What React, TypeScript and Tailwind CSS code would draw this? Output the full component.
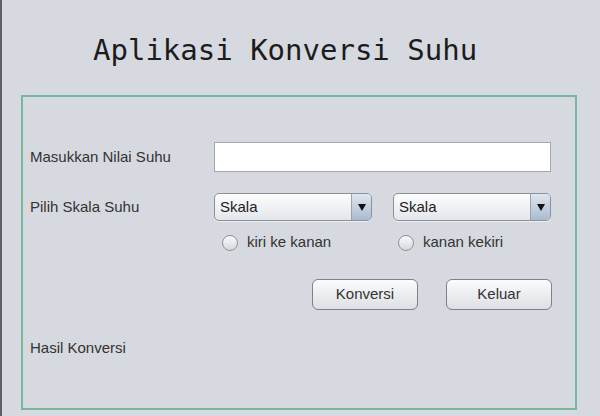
import React from "react";

function Combo() {
  return (
    <div className="flex h-[28px] w-[158px] overflow-hidden rounded-[5px] border border-[#8b9099] bg-gradient-to-b from-[#fdfdfe] to-[#e3e6eb] shadow-[0_1px_0_rgba(255,255,255,0.6)]">
      <div className="flex flex-1 items-center pl-[5px] text-[15px] text-[#222]">Skala</div>
      <div className="flex w-[20px] items-center justify-center border-l border-[#9aa3b0] bg-gradient-to-b from-[#dfe6ef] to-[#a9bbd0]">
        <svg width="8" height="7" viewBox="0 0 8 7">
          <path d="M0 0 H8 L4 7 Z" fill="#111" />
        </svg>
      </div>
    </div>
  );
}

function Radio({ label }: { label: string }) {
  return (
    <div className="flex items-center gap-[9px]">
      <div className="h-[16px] w-[16px] rounded-full border border-[#8e939b] bg-gradient-to-b from-[#fbfbfc] to-[#d3d7dd]" />
      <span className="text-[15px] text-[#333]">{label}</span>
    </div>
  );
}

function JButton({ label }: { label: string }) {
  return (
    <button className="flex h-[31px] w-[106px] items-center justify-center rounded-[6px] border border-[#7c818a] bg-gradient-to-b from-[#fcfcfd] to-[#dcdfe4] text-[15px] text-[#333]">
      {label}
    </button>
  );
}

export default function App() {
  return (
    <div
      className="flex h-[416px] w-[600px] flex-col border-l-2 border-[#5f6165] bg-[#d6d9df]"
      style={{ fontFamily: '"Liberation Sans", Arial, sans-serif' }}
    >
      {/* Title */}
      <div className="h-[95px] pl-[91px] pt-[30px]">
        <h1
          className="text-[29px] leading-[40px] text-[#1c1c1c]"
          style={{ fontFamily: '"DejaVu Sans Mono", monospace' }}
        >
          Aplikasi Konversi Suhu
        </h1>
      </div>

      {/* Form panel */}
      <div className="ml-[19px] flex h-[315px] w-[556px] flex-col border-2 border-[#79b79a] pl-[7px] pt-[45px]">
        <div className="flex h-[30px] items-center">
          <span className="w-[184px] text-[15px] text-[#333]">Masukkan Nilai Suhu</span>
          <div className="h-[30px] w-[337px] border border-[#a4a8ae] bg-white" />
        </div>

        <div className="mt-[21px] flex h-[28px] items-center">
          <span className="w-[184px] text-[15px] text-[#333]">Pilih Skala Suhu</span>
          <div className="flex gap-[21px]">
            <Combo />
            <Combo />
          </div>
        </div>

        <div className="mt-[13px] flex h-[17px] items-center pl-[192px]">
          <div className="w-[176px]">
            <Radio label="kiri ke kanan" />
          </div>
          <Radio label="kanan kekiri" />
        </div>

        <div className="mt-[28px] flex gap-[28px] pl-[282px]">
          <JButton label="Konversi" />
          <JButton label="Keluar" />
        </div>

        <div className="mt-[27px] text-[15px] text-[#333]">Hasil Konversi</div>
      </div>
    </div>
  );
}
